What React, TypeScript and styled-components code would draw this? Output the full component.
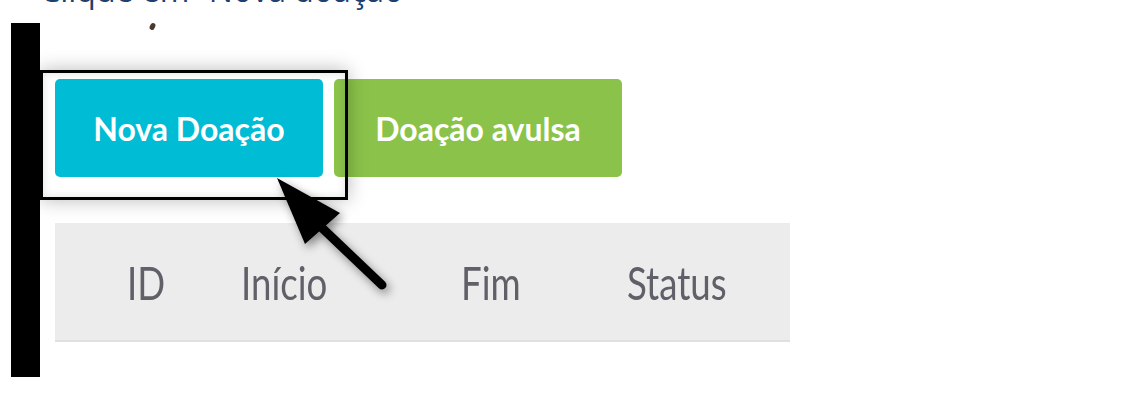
import styled, { createGlobalStyle } from "styled-components";

const GlobalStyle = createGlobalStyle`
    html, body {
        margin: 0;
        padding: 0;
        background: #ffffff;
        overflow: hidden;
    }
`;

export const Page = styled.div`
    width: 1130px;
    height: 403px;
    overflow: hidden;
`;

export const Caption = styled.p`
    margin: -30px 0 0 40px;
    font-family: "Open Sans", sans-serif;
    font-size: 32px;
    line-height: 40px;
    color: #1f3f6e;
    white-space: nowrap;
`;

export const Figure = styled.div`
    display: flex;
    margin: 13px 0 0 11px;
`;

export const Bar = styled.div`
    width: 29px;
    height: 354px;
    background: #000000;
    flex-shrink: 0;
`;

export const Shot = styled.div`
    position: relative;
    display: flex;
    flex-direction: column;
    padding: 0 0 0 15px;
    width: 750px;
`;

export const Speck = styled.div`
    height: 56px;
    &::before {
        content: "";
        display: block;
        margin-left: 95px;
        width: 5px;
        height: 7px;
        border-radius: 3px;
        background: #4a3a2c;
        transform: rotate(25deg);
    }
`;

export const ButtonRow = styled.div`
    display: flex;
    gap: 11px;
`;

export const ActionButton = styled.button<{ $color: string; $width: number }>`
    width: ${(p) => p.$width}px;
    height: 98px;
    border: none;
    border-radius: 5px;
    background: ${(p) => p.$color};
    color: #ffffff;
    font-family: Lato, sans-serif;
    font-weight: 700;
    font-size: 32px;
    padding: 0;
    display: flex;
    align-items: center;
    justify-content: center;
`;

export const TableHead = styled.div`
    margin-top: 46px;
    width: 735px;
    height: 117px;
    background: #ececec;
    border-bottom: 2px solid #e0e0e0;
    display: grid;
    grid-template-columns: 72px 114px 220px 166px 1fr;
    align-items: center;
`;

export const HeadCell = styled.div`
    font-family: Lato, sans-serif;
    font-size: 47px;
    color: #5f6068;
    transform: scaleX(0.78);
    transform-origin: left center;
    white-space: nowrap;
`;

export const Highlight = styled.div`
    position: absolute;
    left: 0;
    top: 47px;
    width: 302px;
    height: 124px;
    border: 3px solid #000000;
    box-shadow: 0 0 18px rgba(0, 0, 0, 0.28), inset 0 0 10px rgba(0, 0, 0, 0.12);
    pointer-events: none;
`;

export const ArrowLayer = styled.svg`
    position: absolute;
    left: 0;
    top: 0;
    overflow: visible;
    filter: drop-shadow(3px 4px 5px rgba(0, 0, 0, 0.45));
`;

function Arrow() {
    return (
        <ArrowLayer width="400" height="300" viewBox="0 0 400 300">
            <polygon points="237,155 300,190 265,221" fill="#000" />
            <line x1="280" y1="203" x2="342" y2="262" stroke="#000" strokeWidth="9" strokeLinecap="round" />
        </ArrowLayer>
    );
}

export default function App() {
    const columns = ["ID", "Início", "Fim", "Status"];
    return (
        <Page>
            <GlobalStyle />
            <Caption>Clique em “Nova doação”</Caption>
            <Figure>
                <Bar />
                <Shot>
                    <Speck />
                    <ButtonRow>
                        <ActionButton $color="#00bcd4" $width={268}>Nova Doação</ActionButton>
                        <ActionButton $color="#8bc34a" $width={288}>Doação avulsa</ActionButton>
                    </ButtonRow>
                    <TableHead>
                        <div />
                        {columns.map((c) => (
                            <HeadCell key={c}>{c}</HeadCell>
                        ))}
                    </TableHead>
                    <Highlight />
                    <Arrow />
                </Shot>
            </Figure>
        </Page>
    );
}
